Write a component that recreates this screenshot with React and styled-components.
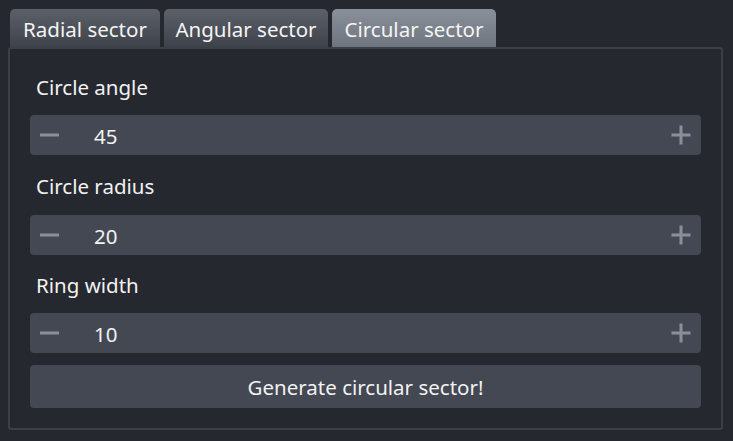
import React from "react";
import styled, { createGlobalStyle } from "styled-components";

const Global = createGlobalStyle`
  html, body { margin: 0; padding: 0; background: #262830; }
  body { font-family: "Noto Sans", "Open Sans", sans-serif; color: #f2f2f2; }
  #root { width: 733px; height: 441px; }
`;

const Page = styled.div`
  box-sizing: border-box;
  width: 733px;
  height: 441px;
  padding: 9px 10px 11px 8px;
  display: flex;
  flex-direction: column;
`;

const TabBar = styled.div`
  display: flex;
  gap: 4px;
  padding-left: 2px;
  height: 38px;
`;

const Tab = styled.div`
  box-sizing: border-box;
  height: 38px;
  width: ${(p) => p.$w}px;
  border-radius: 5px 5px 0 0;
  display: flex;
  align-items: center;
  justify-content: center;
  font-size: 20.5px;
  padding-top: 2px;
  color: #f4f4f4;
  background: ${(p) =>
    p.$active
      ? "linear-gradient(#8a9099, #6e757e)"
      : "linear-gradient(#5c6169, #3e424a)"};
`;

const Panel = styled.div`
  flex: 1;
  box-sizing: border-box;
  border: 2px solid #3b3f47;
  border-radius: 3px;
  padding: 24px 20px 0 20px;
  display: flex;
  flex-direction: column;
`;

const Label = styled.div`
  font-size: 20.5px;
  height: 28px;
  line-height: 28px;
  padding-left: 6px;
  margin-bottom: ${(p) => p.$mb}px;
`;

const Spin = styled.div`
  height: 40px;
  border-radius: 4px;
  background: #434852;
  display: flex;
  align-items: center;
  padding: 0 10px;
  margin-bottom: ${(p) => p.$mb}px;
`;

const Btn = styled.div`
  width: 20px;
  height: 20px;
  display: flex;
  align-items: center;
  justify-content: center;
`;

const Value = styled.div`
  flex: 1;
  font-size: 20.5px;
  padding-left: 34px;
  margin-top: 2px;
`;

const Generate = styled.div`
  height: 43px;
  border-radius: 4px;
  background: #434852;
  display: flex;
  align-items: center;
  justify-content: center;
  font-size: 20.5px;
`;

const Minus = () => (
  <Btn>
    <svg width="20" height="20" viewBox="0 0 20 20">
      <rect x="0" y="8.5" width="19" height="3" fill="#8b9098" />
    </svg>
  </Btn>
);
const Plus = () => (
  <Btn>
    <svg width="20" height="20" viewBox="0 0 20 20">
      <rect x="0.5" y="8.5" width="19" height="3" fill="#8b9098" />
      <rect x="8.5" y="0.5" width="3" height="19" fill="#8b9098" />
    </svg>
  </Btn>
);

const SpinBox = ({ value, mb }) => (
  <Spin $mb={mb}>
    <Minus />
    <Value>{value}</Value>
    <Plus />
  </Spin>
);

export default function App() {
  return (
    <>
      <Global />
      <Page>
        <TabBar>
          <Tab $w={150}>Radial sector</Tab>
          <Tab $w={164}>Angular sector</Tab>
          <Tab $w={164} $active>Circular sector</Tab>
        </TabBar>
        <Panel>
          <Label $mb={14}>Circle angle</Label>
          <SpinBox value="45" mb={17} />
          <Label $mb={15}>Circle radius</Label>
          <SpinBox value="20" mb={16} />
          <Label $mb={14}>Ring width</Label>
          <SpinBox value="10" mb={12} />
          <Generate>Generate circular sector!</Generate>
        </Panel>
      </Page>
    </>
  );
}
